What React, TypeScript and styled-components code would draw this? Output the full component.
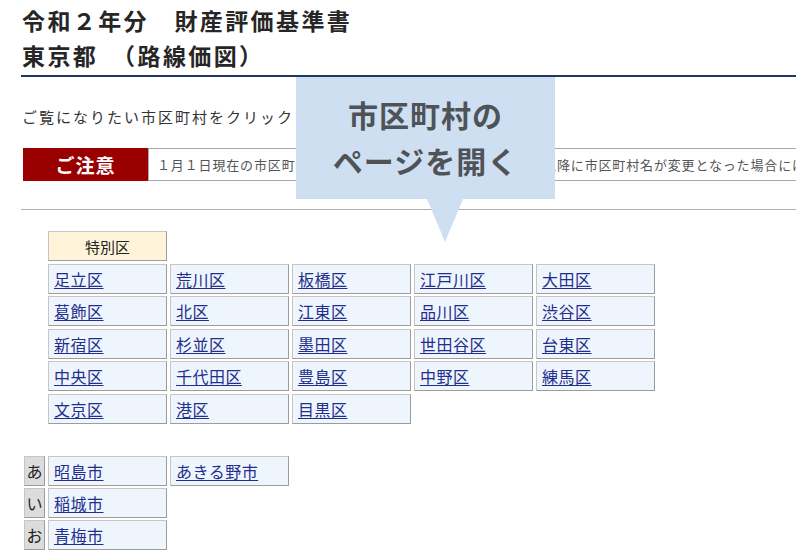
import React from 'react';
import styled, { createGlobalStyle } from 'styled-components';

const GlobalStyle = createGlobalStyle`
    body {
        margin: 0;
        background: #fff;
        font-family: "Noto Sans CJK JP", "Noto Sans", sans-serif;
        color: #222;
    }
`;

const Page = styled.div`
    position: relative;
    width: 775px;
    margin-left: 21px;
    padding-bottom: 4px;
`;

const Title = styled.h1`
    margin: 0;
    padding: 3px 0 2px 1px;
    font-size: 23px;
    line-height: 35px;
    font-weight: 700;
    letter-spacing: 2.4px;
    color: #262626;
    border-bottom: 2px solid #1f3764;
`;

const TitleLine = styled.div`
    white-space: pre;
`;

const Intro = styled.p`
    margin: 28px 0 0 1px;
    font-size: 15px;
    line-height: 24px;
    letter-spacing: 2px;
    color: #333;
`;

const Notice = styled.div`
    display: flex;
    height: 33px;
    margin: 19px 0 0 2px;
`;

const NoticeLabel = styled.div`
    flex: 0 0 125px;
    display: flex;
    align-items: center;
    justify-content: center;
    background: #9a0000;
    color: #fff;
    font-size: 19px;
    font-weight: 700;
    letter-spacing: 1px;
`;

const NoticeText = styled.div`
    flex: 1;
    display: flex;
    align-items: center;
    padding-left: 8px;
    overflow: hidden;
    white-space: nowrap;
    border: 1px solid #a8a8a8;
    border-right: none;
    font-size: 13px;
    letter-spacing: 0.85px;
    color: #555;
`;

const Rule = styled.hr`
    margin: 28px 0 0;
    border: none;
    border-top: 1px solid #b0b0b0;
`;

const WardGrid = styled.div`
    display: grid;
    grid-template-columns: repeat(5, 119px);
    grid-auto-rows: 30px;
    column-gap: 3px;
    row-gap: 2.5px;
    margin: 21px 0 0 27px;
`;

const Cell = styled.div<{ $tone?: 'head' | 'kana' }>`
    display: flex;
    align-items: center;
    justify-content: ${({ $tone }) => ($tone ? 'center' : 'flex-start')};
    padding-left: ${({ $tone }) => ($tone ? '0' : '5px')};
    box-sizing: border-box;
    background: ${({ $tone }) => ($tone === 'head' ? '#fff4d9' : $tone === 'kana' ? '#dcdcdc' : '#eef5fd')};
    border: 1px solid;
    border-color: #c6c6c6 #9c9c9c #9c9c9c #c6c6c6;
    font-size: ${({ $tone }) => ($tone === 'head' ? '15px' : '16px')};
    color: #222;
`;

const Blank = styled.div``;

const WardLink = styled.a`
    color: #1f2f8e;
    text-decoration: underline;
    text-underline-offset: 2px;
    letter-spacing: 0.5px;
    cursor: pointer;
`;

const CityGrid = styled.div`
    display: grid;
    grid-template-columns: 21px 119px 119px;
    grid-auto-rows: 30px;
    column-gap: 3px;
    row-gap: 2px;
    margin: 32px 0 0 3px;
`;

const Callout = styled.div`
    position: absolute;
    left: 275px;
    top: 77px;
    width: 259px;
    height: 122px;
    box-sizing: border-box;
    padding-top: 14px;
    background: #cddff1;
    color: #4f5358;
    font-size: 30px;
    font-weight: 700;
    line-height: 46px;
    text-align: center;
    letter-spacing: 1px;

    &::after {
        content: '';
        position: absolute;
        left: 131px;
        top: 122px;
        border-left: 18px solid transparent;
        border-right: 18px solid transparent;
        border-top: 43px solid #cddff1;
    }
`;

const wards = [
    '足立区', '荒川区', '板橋区', '江戸川区', '大田区',
    '葛飾区', '北区', '江東区', '品川区', '渋谷区',
    '新宿区', '杉並区', '墨田区', '世田谷区', '台東区',
    '中央区', '千代田区', '豊島区', '中野区', '練馬区',
    '文京区', '港区', '目黒区',
];

const cities: [string, string[]][] = [
    ['あ', ['昭島市', 'あきる野市']],
    ['い', ['稲城市']],
    ['お', ['青梅市']],
];

const App: React.FC = () => (
    <>
        <GlobalStyle />
        <Page>
            <Title>
                <TitleLine>令和２年分　財産評価基準書</TitleLine>
                <TitleLine>東京都　（路線価図）</TitleLine>
            </Title>
            <Intro>ご覧になりたい市区町村をクリックしてください。</Intro>
            <Notice>
                <NoticeLabel>ご注意</NoticeLabel>
                <NoticeText>
                    １月１日現在の市区町村名で表示しています。なお、１月２日以降に市区町村名が変更となった場合には、新しい市区町村名も併記しています。
                </NoticeText>
            </Notice>
            <Rule />
            <WardGrid>
                <Cell $tone="head">特別区</Cell>
                <Blank />
                <Blank />
                <Blank />
                <Blank />
                {wards.map((w) => (
                    <Cell key={w}>
                        <WardLink>{w}</WardLink>
                    </Cell>
                ))}
            </WardGrid>
            <CityGrid>
                {cities.map(([kana, list]) => (
                    <React.Fragment key={kana}>
                        <Cell $tone="kana">{kana}</Cell>
                        {list.map((c) => (
                            <Cell key={c}>
                                <WardLink>{c}</WardLink>
                            </Cell>
                        ))}
                        {list.length < 2 && <Blank />}
                    </React.Fragment>
                ))}
            </CityGrid>
            <Callout>
                市区町村の
                <br />
                ページを開く
            </Callout>
        </Page>
    </>
);

export default App;
